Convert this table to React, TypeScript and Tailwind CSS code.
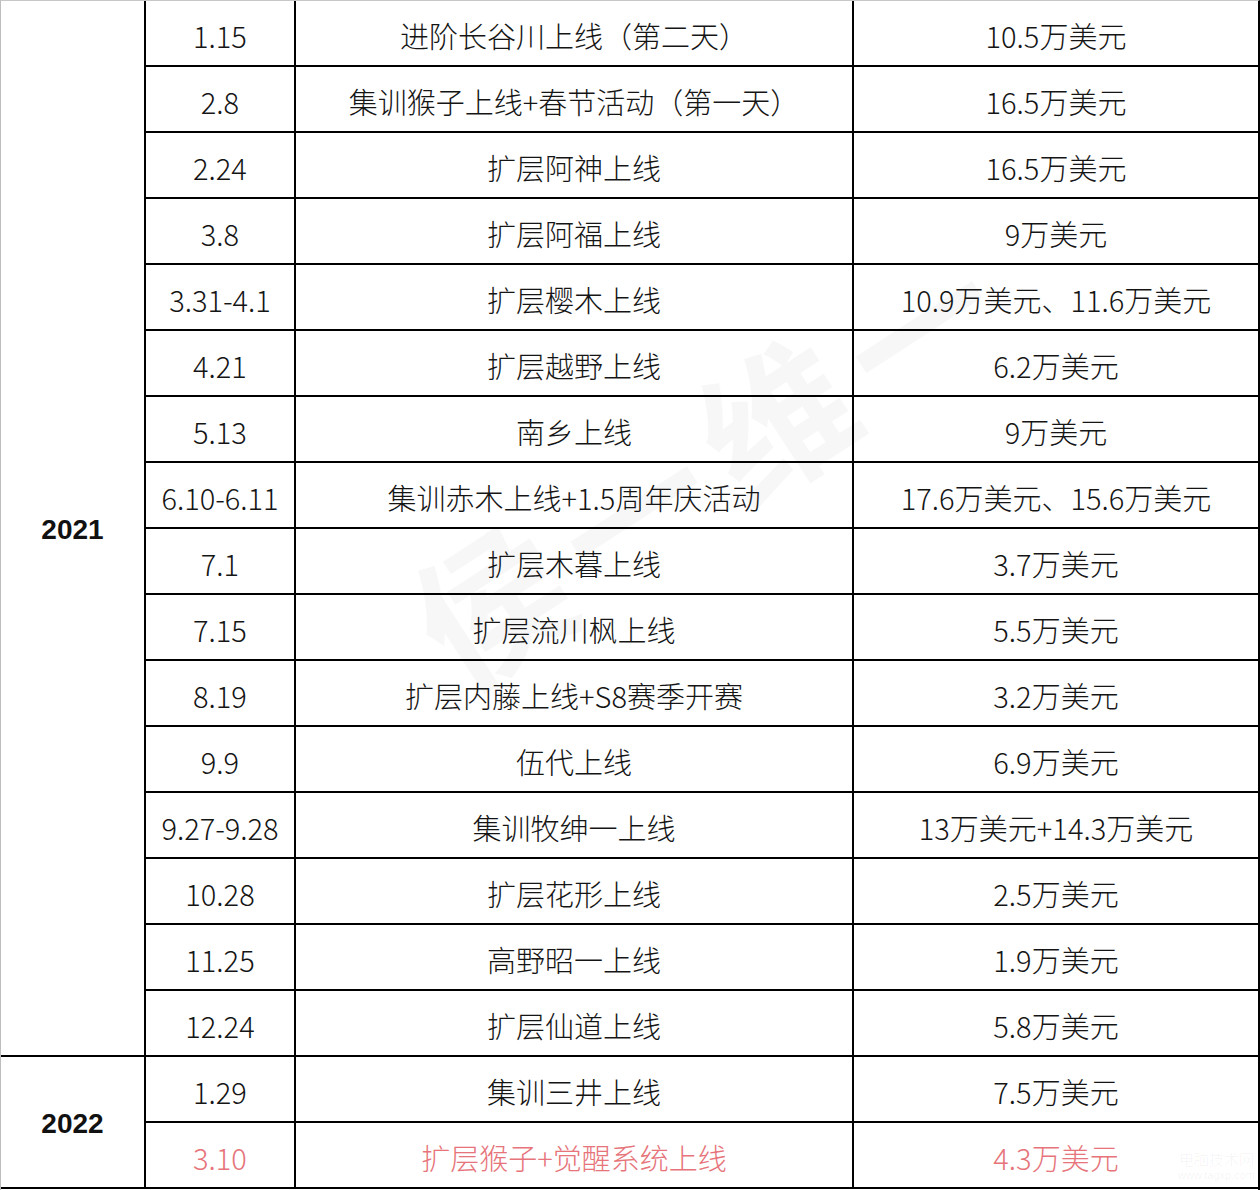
type Row = { date: string; event: string; amount: string; red?: boolean };

const rows2021: Row[] = [
  { date: "1.15", event: "进阶长谷川上线（第二天）", amount: "10.5万美元" },
  { date: "2.8", event: "集训猴子上线+春节活动（第一天）", amount: "16.5万美元" },
  { date: "2.24", event: "扩层阿神上线", amount: "16.5万美元" },
  { date: "3.8", event: "扩层阿福上线", amount: "9万美元" },
  { date: "3.31-4.1", event: "扩层樱木上线", amount: "10.9万美元、11.6万美元" },
  { date: "4.21", event: "扩层越野上线", amount: "6.2万美元" },
  { date: "5.13", event: "南乡上线", amount: "9万美元" },
  { date: "6.10-6.11", event: "集训赤木上线+1.5周年庆活动", amount: "17.6万美元、15.6万美元" },
  { date: "7.1", event: "扩层木暮上线", amount: "3.7万美元" },
  { date: "7.15", event: "扩层流川枫上线", amount: "5.5万美元" },
  { date: "8.19", event: "扩层内藤上线+S8赛季开赛", amount: "3.2万美元" },
  { date: "9.9", event: "伍代上线", amount: "6.9万美元" },
  { date: "9.27-9.28", event: "集训牧绅一上线", amount: "13万美元+14.3万美元" },
  { date: "10.28", event: "扩层花形上线", amount: "2.5万美元" },
  { date: "11.25", event: "高野昭一上线", amount: "1.9万美元" },
  { date: "12.24", event: "扩层仙道上线", amount: "5.8万美元" },
];

const rows2022: Row[] = [
  { date: "1.29", event: "集训三井上线", amount: "7.5万美元" },
  { date: "3.10", event: "扩层猴子+觉醒系统上线", amount: "4.3万美元", red: true },
];

function YearGroup({ year, rows }: { year: string; rows: Row[] }) {
  return (
    <div className="flex shrink-0 border-b-2 border-black">
      <div className="flex w-[143px] shrink-0 items-center justify-center pt-1 font-['Liberation_Sans',sans-serif] text-[28px] font-bold text-[#111]">
        {year}
      </div>
      <div className="flex flex-1 flex-col border-l-2 border-black">
        {rows.map((r, i) => {
          const last = i === rows.length - 1;
          return (
            <div
              key={r.date}
              className={
                "flex shrink-0 " +
                (last ? "h-[64px] " : "h-[66px] border-b-2 border-black ") +
                (r.red ? "text-[#e6747a]" : "text-[#151515]")
              }
            >
              <div className="flex w-[148px] shrink-0 items-center justify-center pt-[5px]">{r.date}</div>
              <div className="flex w-[560px] shrink-0 items-center justify-center border-x-2 border-black pt-[5px]">
                {r.event}
              </div>
              <div className="flex flex-1 items-center justify-center pt-[5px]">{r.amount}</div>
            </div>
          );
        })}
      </div>
    </div>
  );
}

export default function App() {
  return (
    <div className="relative h-[1190px] w-[1260px] overflow-hidden bg-white font-['Noto_Sans_CJK_SC',sans-serif] text-[29px] font-light leading-none">
      <div className="flex h-full flex-col border-l border-t border-l-[#bdbdbd] border-t-[#c8c8c8] border-r-2 border-r-black">
        <YearGroup year="2021" rows={rows2021} />
        <YearGroup year="2022" rows={rows2022} />
      </div>
      {/* faint diagonal watermark */}
      <div className="pointer-events-none absolute left-[370px] top-[380px] -rotate-[33deg] whitespace-nowrap text-[150px] font-bold tracking-[20px] text-black/[0.03]">
        侯一维一
      </div>
      <div className="pointer-events-none absolute left-[1178px] top-[1150px] flex flex-col items-center text-[15px] leading-tight text-black/[0.06]">
        <span>电脑技术网</span>
        <span className="font-['Liberation_Sans',sans-serif] text-[11px]">www.tagxp.com</span>
      </div>
    </div>
  );
}
